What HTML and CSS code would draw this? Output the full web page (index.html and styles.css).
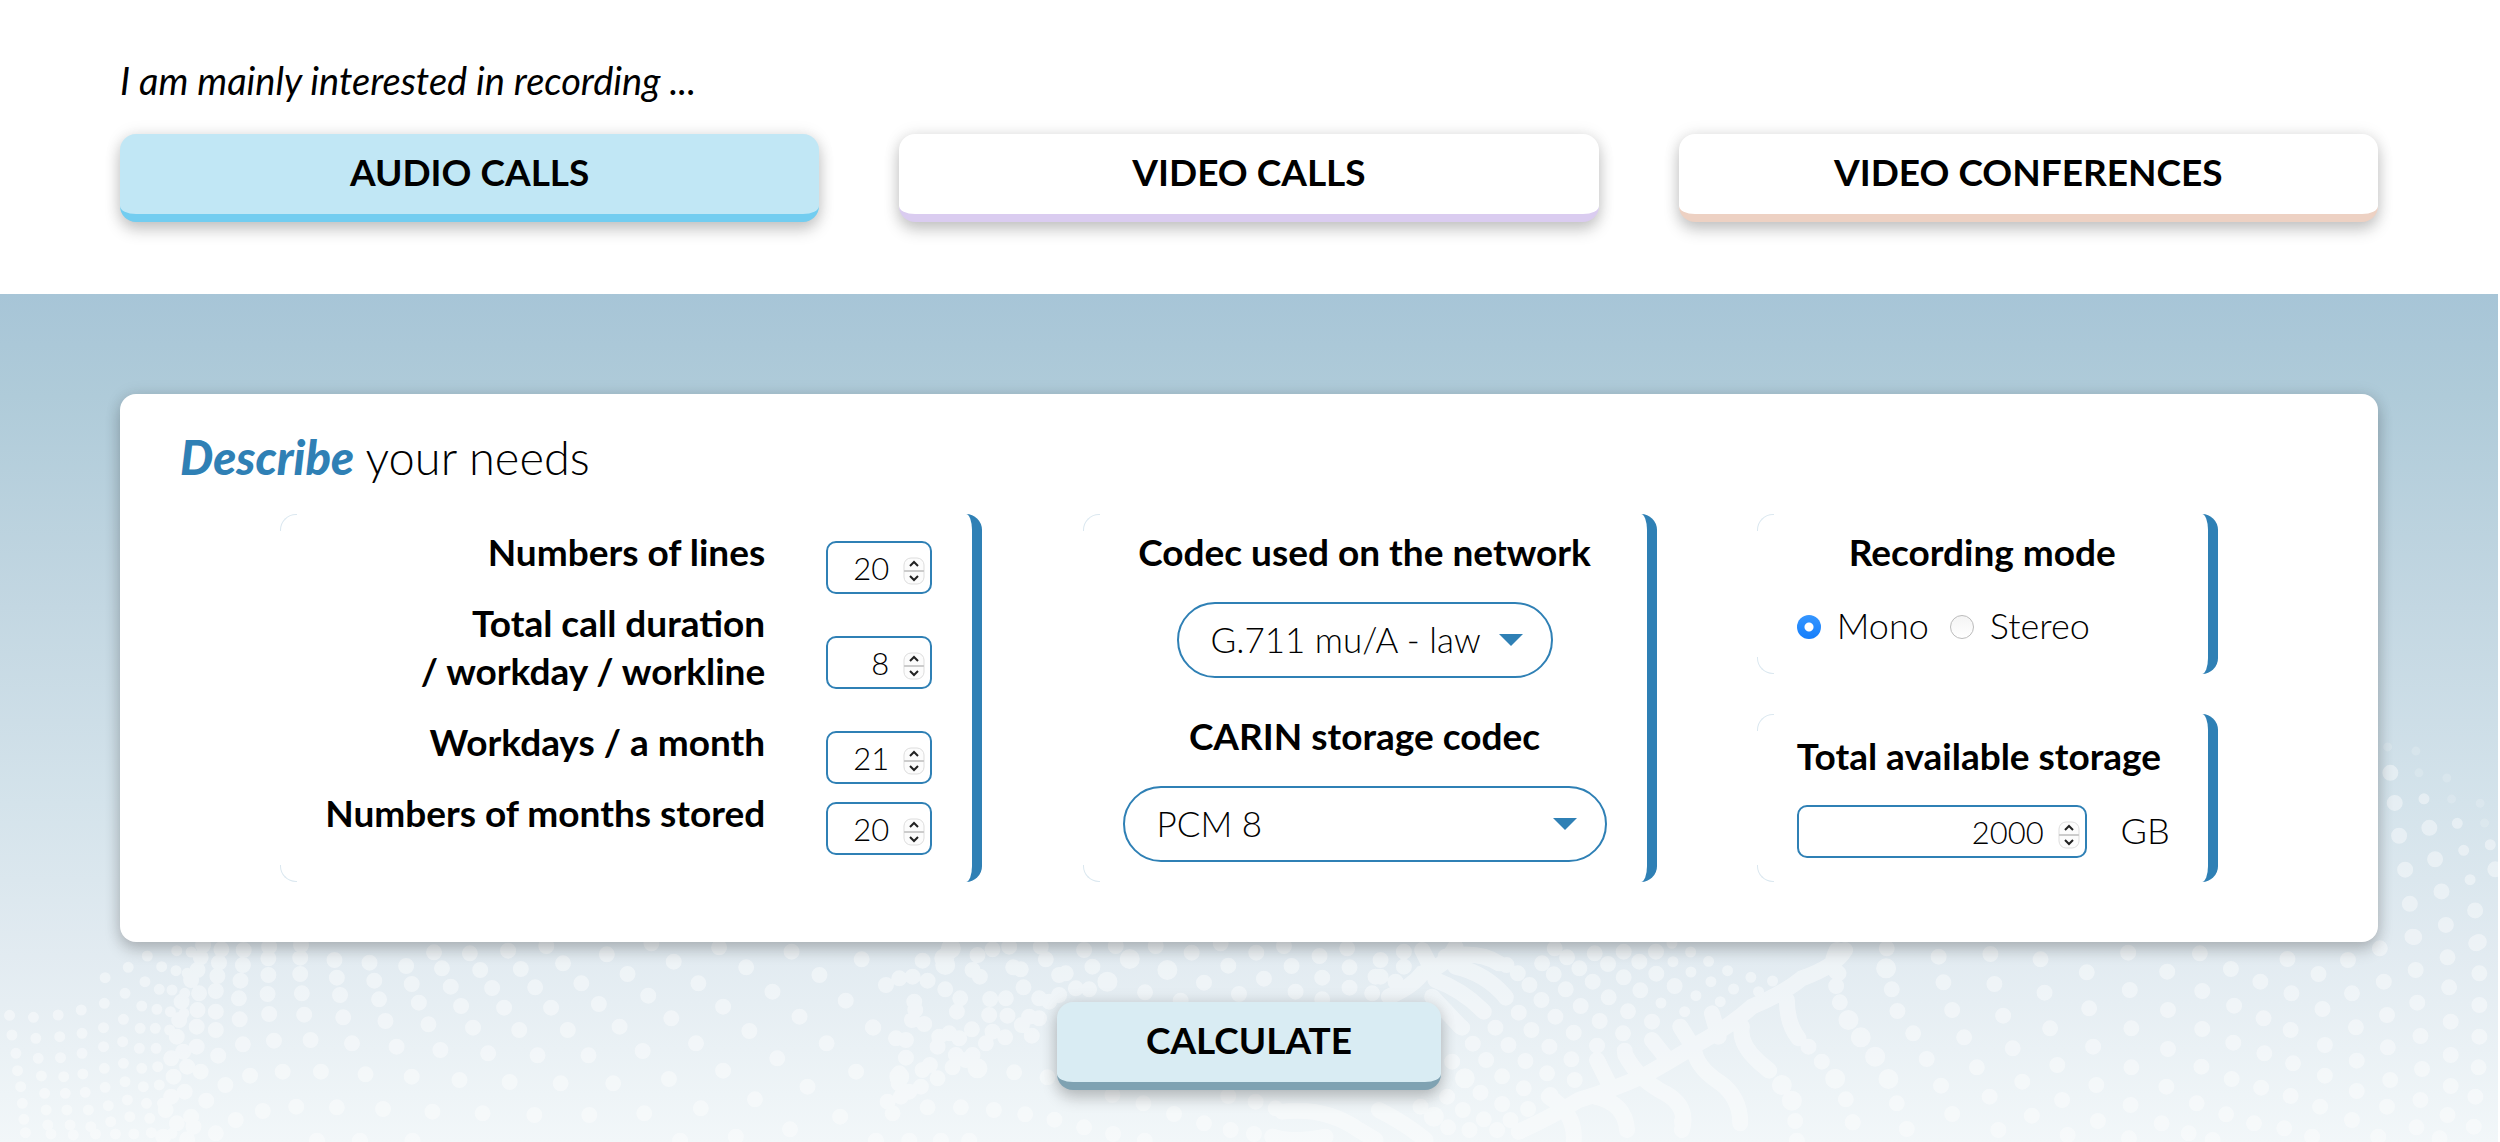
FILE: index.html
```html
<!DOCTYPE html>
<html lang="en">
<head>
    <meta charset="UTF-8">
    <meta name="viewport" content="width=device-width, initial-scale=1.0">
    <title>Recording storage calculator</title>
    <link rel="stylesheet" href="styles.css">
</head>
<body>
    <header class="intro">
        <p class="intro-text">I am mainly interested in recording ...</p>
        <div class="tabs">
            <button type="button" class="btn btn-audio">AUDIO CALLS</button>
            <button type="button" class="btn btn-video">VIDEO CALLS</button>
            <button type="button" class="btn btn-conf">VIDEO CONFERENCES</button>
        </div>
    </header>

    <main class="calculator">
        <!-- dotted waves behind the form -->
        <svg class="waves" viewBox="0 630 2500 512" preserveAspectRatio="none" aria-hidden="true">
            <g transform="translate(0 930) scale(0.797 0.3333)">
                <path class="dot" d="M338 50h0M337 85h0M337 135h0M336 192h0M338 252h0M344 332h0M355 425h0M372 530h0M378 45h0M377 83h0M377 132h0M379 190h0M382 254h0M390 330h0M403 425h0M423 532h0M420 90h0M423 143h0M427 195h0M431 262h0M442 340h0M459 433h0M481 537h0M464 98h0M470 152h0M476 208h0M484 273h0M498 350h0M517 440h0M543 545h0M510 108h0M517 162h0M526 218h0M538 283h0M553 360h0M577 450h0M606 550h0M555 115h0M566 170h0M579 228h0M594 293h0M613 370h0M640 456h0M671 555h0M545 67h0M603 120h0M618 174h0M633 233h0M652 300h0M675 376h0M704 460h0M740 555h0M590 70h0M654 117h0M672 172h0M692 233h0M713 300h0M739 376h0M770 460h0M809 550h0M638 62h0M707 100h0M730 160h0M752 222h0M778 290h0M807 363h0M840 447h0M880 535h0M686 48h0M762 73h0M788 132h0M814 197h0M843 265h0M874 340h0M908 422h0M948 508h0M992 598h0M846 95h0M877 160h0M908 230h0M941 303h0M976 385h0M1014 470h0M1055 560h0M818 40h0M903 52h0M937 112h0M970 185h0M1004 260h0M1038 340h0M1075 425h0M994 65h0M1029 135h0M1062 212h0M1096 292h0M1082 88h0M305 343h0M314 437h0M330 543h0M301 268h0M274 377h0M283 465h0M259 512h0M296 570h0M271 610h0M300 205h0M302 152h0M305 105h0M306 60h0M271 300h0M271 245h0M271 183h0M273 138h0M275 98h0M278 58h0M398 632h0M452 632h0M518 632h0M854 632h0M924 620h0"/>
                <path class="dot small" d="M42 262h0M73 255h0M102 240h0M131 220h0M157 190h0M182 155h0M203 110h0M222 62h0M15 315h0M45 325h0M75 320h0M103 310h0M130 293h0M155 268h0M178 228h0M200 178h0M221 122h0M240 66h0M20 370h0M48 385h0M76 383h0M103 370h0M130 350h0M154 335h0M176 295h0M197 238h0M216 180h0M235 130h0M22 422h0M52 438h0M80 440h0M104 432h0M131 415h0M155 400h0M175 355h0M195 295h0M214 245h0M232 190h0M26 470h0M56 490h0M82 490h0M107 487h0M132 472h0M157 455h0M178 415h0M196 355h0M213 300h0M231 250h0M28 520h0M58 540h0M84 540h0M111 540h0M136 527h0M160 510h0M180 470h0M198 410h0M30 568h0M60 585h0M88 585h0M114 590h0M139 575h0M163 560h0M184 520h0M200 465h0M32 608h0M64 612h0M92 615h0M120 612h0M145 612h0M168 612h0M188 565h0M204 520h0M190 608h0M216 610h0M12 256h0M132 143h0M161 112h0M185 78h0"/>
                <path class="dot" d="M255 45h0M252 82h0M248 120h0M240 150h0M250 190h0M248 240h0M228 215h0M225 270h0M247 290h0M222 320h0M247 350h0M230 365h0M215 385h0M235 410h0M252 425h0M218 440h0M232 485h0M215 500h0M240 560h0M222 580h0M243 590h0M208 540h0M205 620h0M235 628h0"/>
            </g>
            <g transform="translate(860 930) scale(0.3333)">
                <path class="dot" d="M190 92h0M120 145h0M160 140h0M205 152h0M258 178h0M165 215h0M168 240h0M195 282h0M158 270h0M303 205h0M293 245h0M80 165h0M42 293h0M140 330h0M110 325h0M140 383h0M120 430h0M118 460h0M125 500h0M85 515h0M100 550h0M150 485h0M185 470h0M205 532h0M305 532h0M404 540h0M498 553h0M586 569h0M675 592h0M762 612h0M857 632h0M945 552h0M1035 580h0M1115 600h0M1185 612h0M853 520h0M760 495h0M1108 498h0M1190 515h0M1250 535h0M355 75h0M340 120h0M362 140h0M400 58h0M450 50h0M545 50h0M560 88h0M485 118h0M462 112h0M493 172h0M600 135h0M620 130h0M440 205h0M393 207h0M390 255h0M445 257h0M338 298h0M400 305h0M438 322h0M380 340h0M240 320h0M270 310h0M300 325h0M235 350h0M290 375h0M340 375h0M357 417h0M320 390h0M280 412h0M235 445h0M190 420h0M212 405h0M465 427h0M565 442h0M518 317h0M488 285h0M510 260h0M540 265h0M540 205h0M570 215h0M600 195h0M650 175h0M690 178h0M700 110h0M675 60h0M770 48h0M890 48h0M50 632h0M150 632h0M245 632h0M330 632h0M858 187h0M1140 192h0M1035 158h0M1108 107h0M1215 146h0M1298 108h0M1192 68h0M1085 40h0M1275 48h0M1310 185h0M1390 143h0M1382 78h0M1465 55h0M1472 112h0M1472 173h0M1540 190h0M1550 140h0M965 212h0M1390 208h0M998 68h0"/>
                <path class="dot large" d="M255 85h0M258 105h0M275 55h0M745 155h0M812 87h0M925 120h0M355 415h0M120 440h0"/>
                <path class="wave" d="M1270 545Q1400 530 1500 600L1550 630M1240 620Q1300 640 1400 620"/>
            </g>
            <g transform="translate(1380 930) scale(0.3333)">
                <path class="dot" d="M75 65h0M75 110h0M50 155h0M5 90h0M5 140h0M383 105h0M417 130h0M452 165h0M488 210h0M530 260h0M585 308h0M655 347h0M490 100h0M525 133h0M561 178h0M606 228h0M663 273h0M733 310h0M820 275h0M565 82h0M602 115h0M642 155h0M690 202h0M748 244h0M688 102h0M735 142h0M785 181h0M528 55h0M648 70h0M782 95h0M833 131h0M888 168h0M735 65h0M381 203h0M420 248h0M458 300h0M512 350h0M578 388h0M350 293h0M389 345h0M440 393h0M505 430h0M588 450h0M315 245h0M250 293h0M282 341h0M322 390h0M370 439h0M435 475h0M515 495h0M220 395h0M305 488h0M370 522h0M448 537h0M205 500h0M252 540h0M315 568h0M395 570h0M208 592h0M125 530h0M272 600h0M355 600h0M1373 168h0M1384 217h0M1290 350h0M1330 395h0M1402 508h0M1423 577h0M1250 573h0M1255 632h0M1540 178h0M1557 243h0M1555 520h0M1525 55h0M1172 422h0M832 65h0M738 362h0M660 400h0M1085 568h0M910 575h0"/>
                <path class="dot large" d="M165 560h0M258 445h0M1523 115h0M1410 270h0M1447 322h0M1490 380h0M1530 447h0M1370 446h0M1210 465h0M1240 512h0"/>
                <path class="dot small" d="M883 95h0M937 126h0M997 155h0M952 197h0M1025 215h0M918 245h0M847 219h0M818 325h0M905 288h0M1065 177h0M1140 185h0M1182 153h0M1117 142h0M1047 122h0M990 94h0M936 66h0M880 40h0"/>
                <path class="wave" d="M1400 60Q1370 110 1270 145Q1215 190 1120 230Q1060 285 960 340Q890 385 800 435Q700 480 600 510Q520 560 420 605M1225 210Q1225 280 1260 325M1090 290Q1080 340 1140 395L1170 420M945 350Q950 410 1020 455Q1085 500 1085 580M740 375Q780 450 860 490Q930 530 910 600M655 390L690 460M650 500Q740 520 745 600M510 500Q590 550 585 630M820 330L860 380M1000 250L1020 320M905 290L930 330M1375 60Q1350 110 1380 130"/>
                <path class="wave" d="M230 50Q200 110 130 130Q100 170 30 200M130 60L150 100M230 110Q320 130 380 200M170 150Q250 180 310 240M160 200L245 290M200 80Q300 60 360 100M0 540Q80 580 140 630"/>
            </g>
            <g transform="translate(1250 930) scale(0.797 0.3333)">
                <path class="dot" d="M866 80h0M931 72h0M994 88h0M1104 68h0M1194 70h0M1052 127h0M1153 125h0M1233 117h0M1304 87h0M1380 90h0M1343 132h0M1270 155h0M1420 55h0M1425 155h0M1465 120h0M1505 82h0M1541 40h0M1545 130h0M1461 20h0M872 157h0M936 162h0M999 188h0M1106 180h0M1197 183h0M1309 190h0M1385 190h0M1507 172h0M1055 235h0M1154 240h0M1237 227h0M1348 237h0M1274 265h0M1429 255h0M1467 218h0M1545 225h0M883 240h0M947 257h0M834 310h0M898 322h0M1006 295h0M1108 295h0M1197 297h0M1308 300h0M1390 292h0M1509 275h0M959 355h0M1060 350h0M1154 357h0M1236 338h0M1351 345h0M1275 370h0M1430 352h0M1471 318h0M1545 320h0M851 387h0M914 412h0M1015 405h0M1108 412h0M1196 410h0M1311 400h0M1391 392h0M1509 375h0M971 455h0M1064 465h0M1152 470h0M1234 447h0M1351 437h0M1271 473h0M1433 450h0M1473 417h0M1544 412h0M869 467h0M930 500h0M1021 510h0M1107 525h0M1190 520h0M1308 498h0M1391 483h0M1509 468h0M883 552h0M983 557h0M1066 573h0M1146 580h0M1227 553h0M1345 530h0M1262 580h0M1429 530h0M1471 510h0M1540 500h0M826 597h0M941 600h0M1028 615h0M1105 625h0M1180 610h0M1300 595h0M1385 570h0M1505 555h0M1210 630h0M1335 620h0M1418 620h0M1466 592h0M1538 590h0M1495 625h0M758 577h0"/>
            </g>
            <g transform="translate(2300 600) scale(0.3367 0.3457)">
                <path class="dot" d="M274 500h0M287 587h0M390 659h0M300 682h0M318 780h0M407 750h0M332 879h0M426 843h0M526 898h0M439 940h0M345 975h0M537 989h0M586 779h0"/>
                <path class="dot small" d="M374 575h0M473 646h0M492 724h0M511 809h0M571 708h0"/>
                <path class="dot faint" d="M266 425h0M359 500h0M456 576h0M554 645h0M442 515h0M350 437h0M541 588h0"/>
            </g>
        </svg>

        <form class="card">
            <h2 class="card-title"><em>Describe</em> your needs</h2>
            <div class="panels">
                <section class="panel lines">
                    <label for="lines">Numbers of lines</label>
                    <input type="number" id="lines" value="20">
                    <label for="duration">Total call duration<br>/ workday / workline</label>
                    <input type="number" id="duration" value="8">
                    <label for="workdays">Workdays / a month</label>
                    <input type="number" id="workdays" value="21">
                    <label for="months">Numbers of months stored</label>
                    <input type="number" id="months" value="20">
                </section>

                <section class="panel codecs">
                    <label for="network">Codec used on the network</label>
                    <div class="select">
                        <select id="network">
                            <option>G.711 mu/A - law</option>
                        </select>
                    </div>
                    <label for="storage">CARIN storage codec</label>
                    <div class="select select-full">
                        <select id="storage">
                            <option>PCM 8</option>
                        </select>
                    </div>
                </section>

                <div class="side">
                    <fieldset class="panel mode">
                        <legend>Recording mode</legend>
                        <input type="radio" name="mode" id="mono" checked>
                        <label for="mono">Mono</label>
                        <input type="radio" name="mode" id="stereo">
                        <label for="stereo">Stereo</label>
                    </fieldset>
                    <section class="panel available">
                        <label for="available">Total available storage</label>
                        <div class="amount">
                            <input type="number" id="available" value="2000">
                            <span>GB</span>
                        </div>
                    </section>
                </div>
            </div>
        </form>

        <button type="button" class="btn btn-calculate">CALCULATE</button>
    </main>
</body>
</html>
```
FILE: styles.css
```css
* {
    box-sizing: border-box;
}
body {
    display: flex;
    flex-direction: column;
    min-height: 100vh;
    margin: 0;
    padding-right: 2px;
    background: #fff;
    color: #000;
    font-family: Lato, "Open Sans", sans-serif;
    font-size: 36px;
    font-weight: 300;
    line-height: 48px;
}
input, select, button {
    font: inherit;
    color: inherit;
}

/* top buttons */
.intro {
    padding: 56px 120px 72px;
}
.intro-text {
    margin: 0 0 30px;
    font-size: 38px;
    font-style: italic;
    font-weight: 400;
}
.tabs {
    display: grid;
    grid-template-columns: repeat(3, 1fr);
    gap: 80px;
}
.btn {
    height: 88px;
    padding: 0 80px 4px;
    border: 0;
    border-bottom: 8px solid;
    border-radius: 16px;
    background: #fff;
    box-shadow: 0 8px 16px rgba(0, 0, 0, .2), 0 0 16px rgba(0, 0, 0, .1);
    font-size: 37px;
    font-weight: 700;
    cursor: pointer;
}
.btn-audio {
    background: #c1e7f5;
    border-color: #73cdf0;
}
.btn-video {
    border-color: #daccf0;
}
.btn-conf {
    border-color: #edd1c3;
}
.btn-calculate {
    background: #d9ecf3;
    border-color: #7fa2b2;
}

/* form area */
.calculator {
    position: relative;
    flex: 1;
    display: flex;
    flex-direction: column;
    align-items: center;
    gap: 60px;
    padding: 100px 120px 52px;
    background: linear-gradient(#a7c5d7, #afcbd9 12%, #c3d7e2 37%, #d4e3eb 60%, #e2ebf1 78%, #f2f7f9);
}
.waves {
    position: absolute;
    left: 0;
    bottom: 0;
    width: 100%;
    height: 512px;
    fill: none;
    stroke: #fff;
    stroke-linecap: round;
    opacity: .42;
}
.waves path {
    vector-effect: non-scaling-stroke;
}
.dot {
    stroke-width: 16px;
}
.small {
    stroke-width: 11px;
}
.large {
    stroke-width: 20px;
}
.faint {
    stroke-width: 9px;
    opacity: .4;
}
.wave {
    stroke-width: 16px;
}
.card {
    position: relative;
    width: 100%;
    padding: 38px 60px 60px;
    border-radius: 16px;
    background: #fff;
    box-shadow: 0 8px 16px rgba(0, 0, 0, .2), 0 0 16px rgba(0, 0, 0, .1);
}
.card-title {
    margin: 0 0 32px;
    font-size: 47px;
    font-weight: 300;
    line-height: 50px;
}
.card-title em {
    color: #2f80b5;
    font-weight: 900;
}
.calculator .btn {
    position: relative;
    min-width: 384px;
}

/* panels */
.panels {
    display: flex;
    justify-content: space-evenly;
}
.panel {
    position: relative;
    min-width: 0;
    margin: 0;
    padding: 14px 40px 20px;
    border: 0;
    border-right: 10px solid #2f80b5;
    border-radius: 16px;
}
/* thin arcs on the left corners */
.panel::before, .panel::after {
    content: "";
    position: absolute;
    left: 0;
    width: 16px;
    height: 16px;
    border-left: 1px solid #dbe8f0;
}
.panel::before {
    top: 0;
    border-top: 1px solid #dbe8f0;
    border-top-left-radius: 16px;
}
.panel::after {
    bottom: 0;
    border-bottom: 1px solid #dbe8f0;
    border-bottom-left-radius: 16px;
}
.panel > label, legend {
    font-size: 37px;
    font-weight: 700;
}
input[type="number"] {
    width: 106px;
    height: 53px;
    padding: 0 10px;
    border: 2px solid #2f80b5;
    border-radius: 10px;
    background: #fff;
    font-size: 31px;
    text-align: right;
}
input[type="number"]::-webkit-inner-spin-button {
    -webkit-appearance: none;
    width: 22px;
    height: 28px;
    margin: 8px -5px 0 14px;
    opacity: 1;
    background: url("data:image/svg+xml,%3Csvg xmlns='http://www.w3.org/2000/svg' width='22' height='28' viewBox='0 0 22 28' fill='none'%3E%3Crect x='1' y='1' width='20' height='26' rx='7' fill='%23fcfcfc' stroke='%23ddd'/%3E%3Cpath d='M1 14h20' stroke='%23ccc' stroke-width='2'/%3E%3Cpath d='M7 9l4-4 4 4M7 19l4 4 4-4' stroke='%23222' stroke-width='2'/%3E%3C/svg%3E") center no-repeat;
}
.lines {
    display: grid;
    grid-template-columns: 445px auto;
    column-gap: 61px;
    align-items: center;
    align-content: start;
    text-align: right;
}
.lines label {
    padding-bottom: 23px;
}
.lines input {
    margin-top: 8px;
}
.codecs {
    width: 574px;
    display: flex;
    flex-direction: column;
    align-items: center;
}
.select {
    position: relative;
    width: 376px;
    margin: 26px 0 34px;
}
.select-full {
    width: 100%;
    margin-bottom: 0;
}
.select select {
    appearance: none;
    display: block;
    width: 100%;
    height: 76px;
    padding: 0 60px 2px 32px;
    border: 2px solid #2f80b5;
    border-radius: 38px;
    background: #fff;
    font-size: 35px;
}
.select::after {
    content: "";
    position: absolute;
    top: 32px;
    right: 30px;
    border: 12px solid transparent;
    border-top-color: #2f80b5;
    border-bottom: 0;
    pointer-events: none;
}
.side {
    display: flex;
    flex-direction: column;
    gap: 40px;
    width: 461px;
}
.mode {
    display: flex;
    flex-wrap: wrap;
    align-items: center;
    padding-bottom: 25px;
}
.mode legend {
    float: left;
    width: 100%;
    margin-bottom: 25px;
    padding: 0;
    text-align: center;
}
.panel.mode label {
    margin-right: 21px;
    font-size: 36px;
    font-weight: 300;
}
.mode input {
    appearance: none;
    width: 24px;
    height: 24px;
    margin: 4px 16px 0 0;
    border: 1px solid #bbb;
    border-radius: 50%;
    background: linear-gradient(#f4f4f4, #fff);
}
.mode input:checked {
    border: 0;
    background: radial-gradient(#fff 4px, transparent 5px), linear-gradient(#3596ff, #157efb);
}
.available {
    flex: 1;
    padding: 18px 38px 20px 40px;
}
.available label {
    display: block;
    white-space: nowrap;
}
.amount {
    display: flex;
    align-items: center;
    justify-content: space-between;
    margin-top: 25px;
}
.amount input {
    width: 290px;
}
.amount span {
    padding-bottom: 4px;
}
```
